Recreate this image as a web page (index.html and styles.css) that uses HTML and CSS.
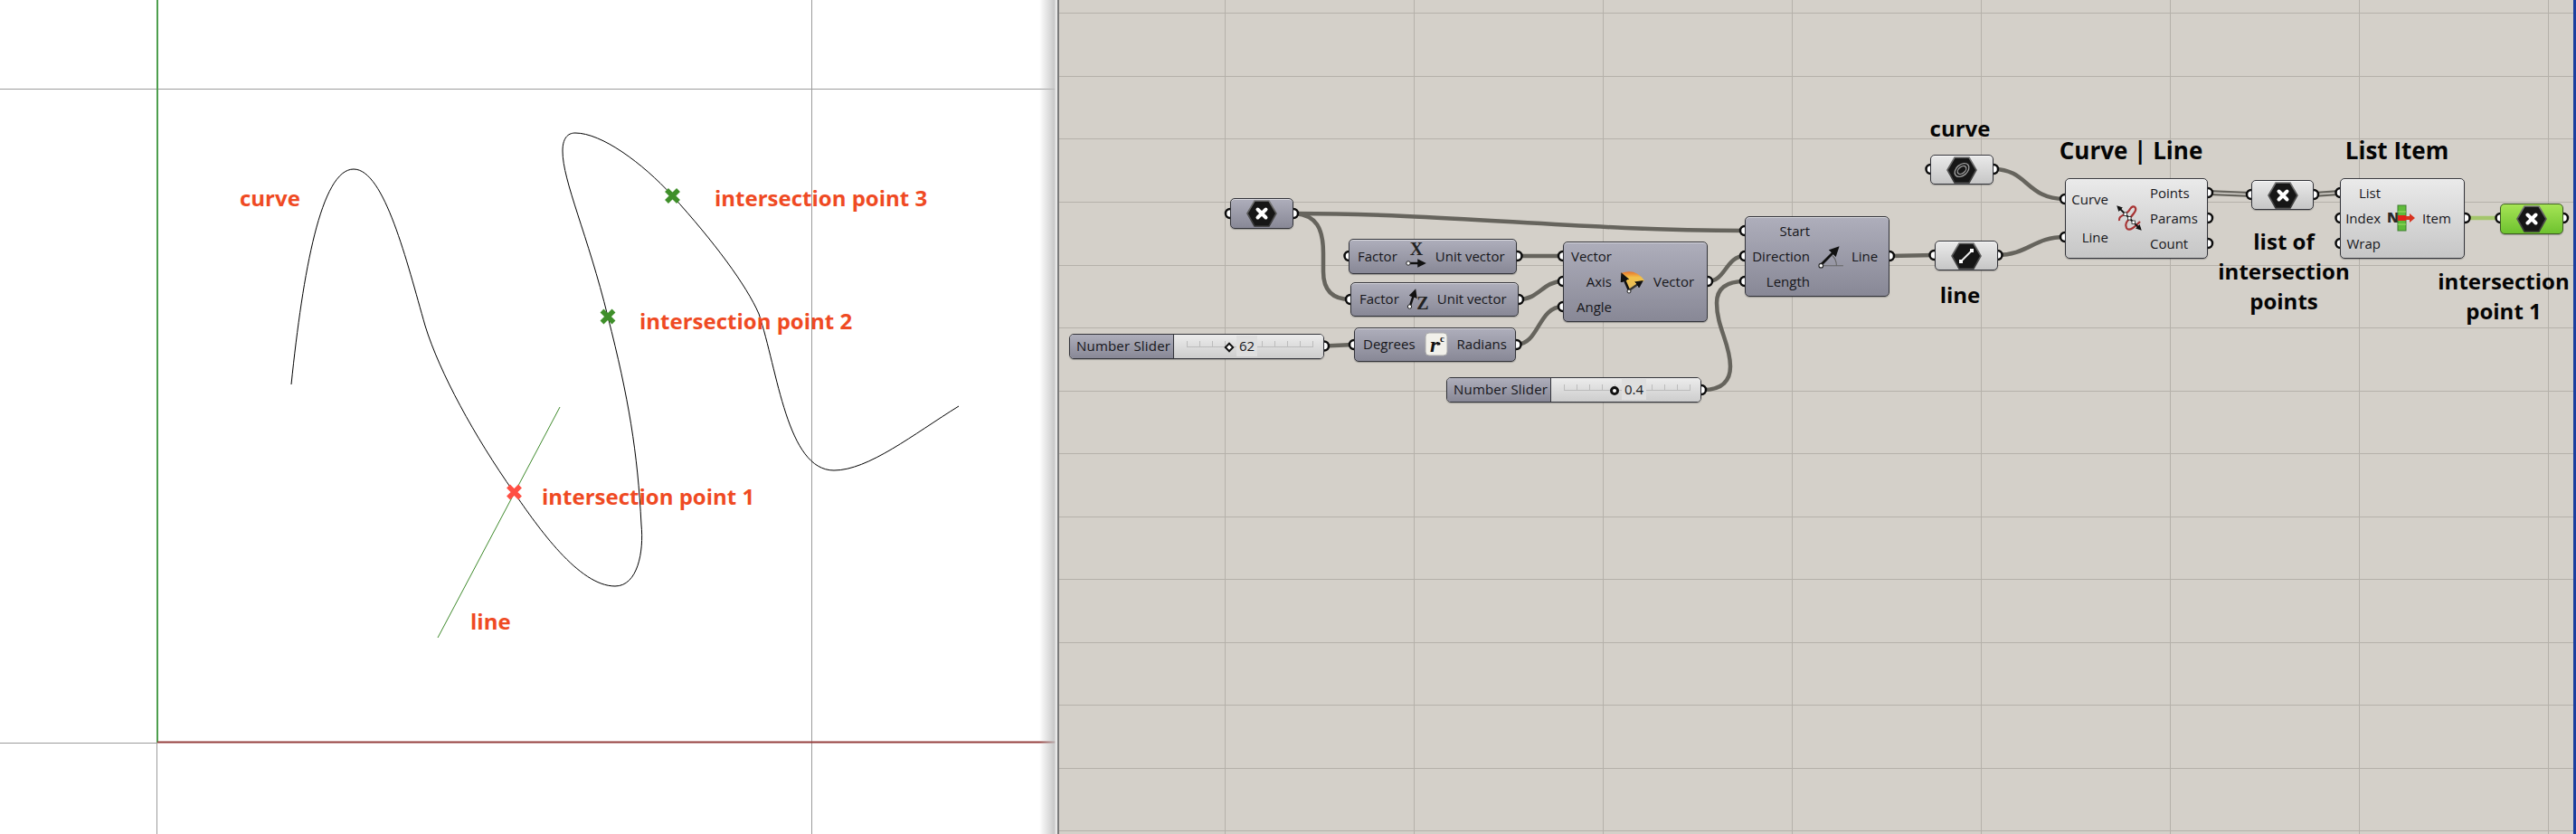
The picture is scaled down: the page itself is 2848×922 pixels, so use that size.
FILE: index.html
```html
<!DOCTYPE html>
<html lang="en">
<head>
<meta charset="utf-8">
<title>Curve and line intersection definition</title>
<link rel="stylesheet" href="styles.css">
</head>
<body>
<svg class="defs" aria-hidden="true">
  <defs>
    <linearGradient id="bevel" x1="0" y1="0" x2="0" y2="1"><stop offset="0" stop-color="#7a7a7a"/><stop offset="1" stop-color="#333"/></linearGradient>
    <linearGradient id="fan" x1="0" y1="0" x2="0" y2="1"><stop offset="0" stop-color="#e8732a"/><stop offset=".3" stop-color="#f2c14a"/><stop offset="1" stop-color="#e0b95e"/></linearGradient>
    <symbol id="hex" viewBox="0 0 34 30"><polygon points="1,15 9,1 25,1 33,15 25,29 9,29" fill="#161616" stroke="url(#bevel)" stroke-width="1.6"/></symbol>
    <symbol id="hexx" viewBox="0 0 34 30"><use href="#hex" width="34" height="30"/><path d="M12.5 10.5l9 9m0-9l-9 9" stroke="#fff" stroke-width="4" stroke-linecap="round"/></symbol>
    <marker id="tip" viewBox="0 0 10 10" refX="6" refY="5" markerWidth="4" markerHeight="4" orient="auto-start-reverse"><path d="M0 0L10 5L0 10z" fill="#111"/></marker>
    <marker id="tip-sm" viewBox="0 0 10 10" refX="6" refY="5" markerWidth="3.500" markerHeight="3.500" orient="auto-start-reverse"><path d="M0 0L10 5L0 10z" fill="#111"/></marker>
  </defs>
</svg>
<main class="app">
  <section class="viewport">
    <svg class="view-svg" viewBox="0 0 1169 922">
      <path class="v-grid" d="M0 98H1169M897.500 0V922M173.500 821V922M0 821.500H174"/>
      <path class="v-x" d="M174 0V821"/>
      <path class="v-y" d="M174 820.500H1167"/>
      <path class="v-curve" d="M322 425C335 300 355 187 391 187C425 187 450 290 470 360C486 412 525 483 568 544C595 583 640 648 680 648C705 648 712 610 709 580C705 500 695 440 672 350C650 260 622 200 622 167C622 150 630 147 636 147C665 147 710 180 743 216C790 268 825 315 839 347C860 410 870 520 922 520C960 520 1010 480 1060 449"/>
      <path class="v-line" d="M484 705L619 450"/>
      <path class="v-mark mark-red" d="M562 537.500L575 550.500M575 537.500L562 550.500"/>
      <path class="v-mark mark-green" d="M665.500 343.500L678.500 356.500M678.500 343.500L665.500 356.500"/>
      <path class="v-mark mark-green" d="M737 210L750 223M750 210L737 223"/>
    </svg>
    <span class="note note-curve">curve</span>
    <span class="note note-p3">intersection point 3</span>
    <span class="note note-p2">intersection point 2</span>
    <span class="note note-p1">intersection point 1</span>
    <span class="note note-line">line</span>
    <div class="edge-shadow"></div>
  </section>

  <section class="canvas">
    <svg class="wires" viewBox="1171 0 1674 922">
      <path class="grid" d="M1354.500 0V922M1563.500 0V922M1772.500 0V922M1981.500 0V922M2190.500 0V922M2399.500 0V922M2608.500 0V922M2817.500 0V922M1171 14.500H2845M1171 84.500H2845M1171 153.500H2845M1171 223.500H2845M1171 293.500H2845M1171 362.500H2845M1171 432.500H2845M1171 501.500H2845M1171 571.500H2845M1171 640.500H2845M1171 710.500H2845M1171 779.500H2845M1171 849.500H2845M1171 918.500H2845"/>
      <g class="wire">
        <path d="M1432 236C1600 236 1750 255 1929 255"/>
        <path d="M1432 236C1455 238 1463 252 1463 280V300C1463 320 1472 331 1493 331"/>
        <path d="M1678 283H1728"/>
        <path d="M1679 331C1702 331 1705 311 1728 311"/>
        <path d="M1676 381C1702 381 1700 339 1728 339"/>
        <path d="M1464 382.500L1497 381"/>
        <path d="M1888 311C1908 311 1908 283 1929 283"/>
        <path d="M1883 431C1905 431 1913 420 1913 405C1913 380 1898 362 1898 335C1898 318 1910 311 1929 311"/>
        <path d="M2089 283L2139 282"/>
        <path d="M2204 187C2242 187 2240 220 2283 220"/>
        <path d="M2208 282C2242 282 2248 262 2283 262"/>
      </g>
      <g class="wire-multi">
        <path d="M2441 213L2489 215"/>
        <path d="M2558 215L2587 213"/>
      </g>
      <g class="wire-multi-core">
        <path d="M2441 213L2489 215"/>
        <path d="M2558 215L2587 213"/>
      </g>
      <path class="wire-on" d="M2725 241H2764"/>
      <g class="ports">
        <circle cx="1360" cy="236" r="5"/><circle cx="1430" cy="236" r="5"/>
        <circle cx="1491.500" cy="283" r="5"/><circle cx="1677.500" cy="283" r="5"/>
        <circle cx="1493" cy="331" r="5"/><circle cx="1679" cy="331" r="5"/>
        <circle cx="1497" cy="381" r="5"/><circle cx="1676.500" cy="381" r="5"/>
        <circle cx="1464" cy="382.500" r="5"/><circle cx="1881" cy="431" r="5"/>
        <circle cx="1728" cy="283" r="5"/><circle cx="1728" cy="311" r="5"/><circle cx="1728" cy="339" r="5"/><circle cx="1888" cy="311" r="5"/>
        <circle cx="1929" cy="255" r="5"/><circle cx="1929" cy="283" r="5"/><circle cx="1929" cy="311" r="5"/><circle cx="2089" cy="283" r="5"/>
        <circle cx="2134.500" cy="187" r="5"/><circle cx="2204" cy="187" r="5"/>
        <circle cx="2138.500" cy="282" r="5"/><circle cx="2208.500" cy="282" r="5"/>
        <circle cx="2283" cy="220" r="5"/><circle cx="2283" cy="262" r="5"/>
        <circle cx="2441" cy="213" r="5"/><circle cx="2441" cy="241" r="5"/><circle cx="2441" cy="269" r="5"/>
        <circle cx="2489" cy="215" r="5"/><circle cx="2558" cy="215" r="5"/>
        <circle cx="2587.500" cy="213" r="5"/><circle cx="2587.500" cy="241" r="5"/><circle cx="2587.500" cy="269" r="5"/><circle cx="2725.500" cy="241" r="5"/>
        <circle cx="2764.500" cy="241" r="5"/><circle cx="2834" cy="241" r="5"/>
      </g>
    </svg>

    <div class="node dark param n-input"><svg class="hex"><use href="#hexx"/></svg></div>

    <div class="node dark strip n-factorx">
      <span>Factor</span>
      <svg class="ico" viewBox="0 0 26 32"><text class="serif-b" x="13" y="15" text-anchor="middle">X</text><path class="arrow" d="M5 24H20" marker-end="url(#tip)"/><circle class="dot" cx="4" cy="24" r="2.200"/></svg>
      <span>Unit vector</span>
    </div>
    <div class="node dark strip n-factorz">
      <span>Factor</span>
      <svg class="ico" viewBox="0 0 26 32"><text class="serif-b" x="18" y="28" text-anchor="middle">Z</text><path class="arrow" d="M4 24L9 9" marker-end="url(#tip)"/><circle class="dot" cx="3.500" cy="25" r="2.200"/></svg>
      <span>Unit vector</span>
    </div>
    <div class="node dark strip n-degrees">
      <span>Degrees</span>
      <svg class="ico tile-ico" viewBox="0 0 26 32"><rect class="tile" x="1" y="4" width="24" height="25" rx="4"/><text class="serif-r" x="6" y="25">r</text><text class="serif-c" x="17" y="14">c</text><circle cx="16" cy="16" r="1.600" fill="#111"/></svg>
      <span>Radians</span>
    </div>

    <div class="node slider n-slider1">
      <div class="s-label">Number Slider</div>
      <div class="s-track">
        <div class="rail"></div>
        <span class="s-value v-62">62</span>
        <span class="grip diamond g-62"></span>
      </div>
    </div>
    <div class="node slider n-slider2">
      <div class="s-label">Number Slider</div>
      <div class="s-track">
        <div class="rail"></div>
        <span class="s-value v-04">0.4</span>
        <span class="grip ring g-04"></span>
      </div>
    </div>

    <div class="node dark comp n-rotate">
      <div class="ins"><span>Vector</span><span>Axis</span><span>Angle</span></div>
      <div class="glyph"><svg class="ico-lg" viewBox="0 0 30 28"><path d="M11 25L2 5Q18 -1 28 13Z" fill="url(#fan)"/><path class="arrow-th" d="M11 24L4 8" marker-end="url(#tip)"/><path class="arrow-gr" d="M11 24L24 15" marker-end="url(#tip)"/><circle class="dot" cx="11" cy="25" r="2"/></svg></div>
      <div class="outs"><span>Vector</span></div>
    </div>
    <div class="node dark comp n-sdl">
      <div class="ins"><span>Start</span><span>Direction</span><span>Length</span></div>
      <div class="glyph"><svg class="ico-lg" viewBox="0 0 28 28"><path class="thin" d="M3 24H27M16 14Q20 18 20 24"/><path class="arrow-th" d="M4 23L20 7" marker-end="url(#tip)"/><circle class="dot" cx="4" cy="24" r="2.200"/></svg></div>
      <div class="outs"><span>Line</span></div>
    </div>

    <div class="node light param n-curve"><svg class="hex"><use href="#hex"/><g class="spiral"><ellipse cx="17" cy="15" rx="9" ry="6" transform="rotate(-40 17 15)"/><ellipse cx="17" cy="15" rx="5.500" ry="3.500" transform="rotate(-40 17 15)"/></g></svg></div>
    <div class="node light param n-line"><svg class="hex"><use href="#hex"/><path d="M11 21L23 9" stroke="#eee" stroke-width="2"/><rect x="9" y="19" width="4" height="4" fill="#fff"/><rect x="21" y="7" width="4" height="4" fill="#fff"/></svg></div>

    <div class="node light comp n-cl">
      <div class="ins spaced"><span>Curve</span><span>Line</span></div>
      <div class="glyph"><svg class="ico-lg" viewBox="0 0 30 30"><path class="red-curve" d="M4 18C3 11 12 13 16 5C20 -1 25 4 20 10C15 17 9 20 12 26C15 31 22 24 27 19"/><path class="arrow-cl" d="M3 3L27 27" marker-start="url(#tip-sm)" marker-end="url(#tip-sm)"/><rect class="sq" x="9" y="9" width="3.500" height="3.500"/><rect class="sq" x="13.500" y="13.500" width="3.500" height="3.500"/><rect class="sq" x="18" y="18" width="3.500" height="3.500"/></svg></div>
      <div class="outs"><span>Points</span><span>Params</span><span>Count</span></div>
    </div>

    <div class="node light param n-list"><svg class="hex"><use href="#hexx"/></svg></div>

    <div class="node light comp n-li">
      <div class="ins"><span>List</span><span>Index</span><span>Wrap</span></div>
      <div class="glyph"><svg class="ico-lg" viewBox="0 0 30 30"><text class="n-letter" x="-1" y="20">N</text><rect x="11" y="1" width="9" height="28" fill="#5fbb3a" stroke="#3f7f2f"/><path class="seg" d="M11 8H20M11 22H20"/><rect x="11" y="12" width="9" height="6" fill="#e2231a"/><path d="M20 13H24V10L30 15L24 20V17H20Z" fill="#d8321f"/></svg></div>
      <div class="outs"><span>Item</span></div>
    </div>

    <div class="node green param n-green"><svg class="hex"><use href="#hexx"/></svg></div>

    <div class="tag tag-curve">curve</div>
    <div class="tag tag-big tag-cl">Curve | Line</div>
    <div class="tag tag-big tag-li">List Item</div>
    <div class="tag tag-line">line</div>
    <div class="tag tag-list">list of<br>intersection<br>points</div>
    <div class="tag tag-p1">intersection<br>point 1</div>
  </section>
</main>
</body>
</html>
```

FILE: styles.css
```css
* { box-sizing: border-box; }
html, body { margin: 0; height: 100%; background: #fff; overflow: hidden; }
.defs { width: 0; height: 0; display: block; }
.app { display: flex; width: 2848px; height: 922px; font-family: "Open Sans", "Noto Sans", sans-serif; }

/* Left: viewport */
.viewport { position: relative; flex: 0 0 1169px; height: 922px; background: #fff; overflow: hidden; }
.view-svg { display: block; width: 1169px; height: 922px; }
.v-grid { stroke: #9c9c9c; stroke-width: 1; fill: none; shape-rendering: crispEdges; }
.v-x { stroke: #4f9f4f; stroke-width: 2; fill: none; }
.v-y { stroke: #96403f; stroke-width: 2; fill: none; }
.v-curve { stroke: #000; stroke-width: 1; fill: none; }
.v-line { stroke: #3f8a2c; stroke-width: 1; fill: none; }
.v-mark { stroke-width: 5.500; fill: none; }
.mark-red { stroke: #ff4f43; }
.mark-green { stroke: #3f8f2a; }
.edge-shadow { position: absolute; top: 0; bottom: 0; right: 0; width: 20px;
  background: linear-gradient(to right, rgba(190,190,190,0) 0, rgba(190,190,190,.85) 17px, #e8e8e8 18px); }

.note { position: absolute; font-weight: 700; font-size: 24px; line-height: 30px; color: #ef4a23; white-space: nowrap; }
.note-curve { left: 265px; top: 204px; }
.note-p3 { left: 790px; top: 204px; }
.note-p2 { left: 707px; top: 340px; }
.note-p1 { left: 599px; top: 534px; }
.note-line { left: 520px; top: 672px; }

/* Right: node canvas */
.canvas { position: relative; flex: 1 1 auto; height: 922px; background: #d4d0c9; border-left: 2px solid #7a7a7a; border-right: 3px solid #1b3fa0; overflow: hidden; }
.wires { position: absolute; left: 0; top: 0; width: 1674px; height: 922px; }
.grid { stroke: #b5b1aa; stroke-width: 1; fill: none; shape-rendering: crispEdges; }
.wire path { stroke: #66645d; stroke-width: 4.500; fill: none; }
.wire-multi path { stroke: #66645d; stroke-width: 6; fill: none; }
.wire-multi-core path { stroke: #d8d5cf; stroke-width: 1.500; fill: none; }
.wire-on { stroke: #a4c66c; stroke-width: 4.500; fill: none; }
.ports circle { fill: #fff; stroke: #0c0c0c; stroke-width: 2.500; }

.node { position: absolute; border: 1px solid #33343a; border-radius: 5px; font-size: 15px; color: #16161a; box-shadow: 0 1px 1px rgba(60,60,60,.35); white-space: nowrap; }
.dark { background: linear-gradient(#aeaebb, #888896); box-shadow: inset 0 1px 0 rgba(255,255,255,.55), 0 1px 1px rgba(60,60,60,.35); }
.light { background: linear-gradient(#eaeaea, #c6c6c6); box-shadow: inset 0 1px 0 rgba(255,255,255,.7), 0 1px 1px rgba(60,60,60,.35); }
.green { background: linear-gradient(#a6e455, #6ec22f); border-color: #3c5c22; }
.param { display: flex; align-items: center; justify-content: center; }
.hex { width: 34px; height: 30px; display: block; }
.hex use { width: 34px; height: 30px; }
.spiral ellipse { fill: none; stroke: #9a9a9a; stroke-width: 1.400; }

.n-input { left: 189px; top: 219px; width: 70px; height: 34px; }
.n-curve { left: 963px; top: 171px; width: 70px; height: 33px; }
.n-line { left: 968px; top: 266px; width: 70px; height: 33px; }
.n-list { left: 1318px; top: 199px; width: 69px; height: 33px; }
.n-green { left: 1593px; top: 225px; width: 70px; height: 34px; }

.strip { display: flex; align-items: center; padding-bottom: 2px; }
.n-factorx { left: 320px; top: 264px; width: 186px; height: 39px; padding-left: 9px; gap: 8px; }
.n-factorz { left: 322px; top: 312px; width: 186px; height: 38px; padding-left: 9px; gap: 8px; }
.n-degrees { left: 326px; top: 362px; width: 179px; height: 38px; padding-left: 9px; gap: 10px; }
.ico { width: 26px; height: 32px; flex: none; overflow: visible; }
.tile { fill: #f1f0ea; stroke: #aaa; stroke-width: 1; }
.serif-b { font-family: "Liberation Serif", serif; font-weight: 700; font-size: 20px; fill: #222; }
.serif-r { font-family: "Liberation Serif", serif; font-weight: 700; font-style: italic; font-size: 24px; fill: #111; }
.serif-c { font-family: "Liberation Serif", serif; font-weight: 700; font-size: 11px; fill: #111; }
.n-letter { font-family: "Open Sans", sans-serif; font-weight: 800; font-size: 16px; fill: #2a2a2a; }
.arrow { stroke: #111; stroke-width: 2.400; fill: none; }
.arrow-th { stroke: #111; stroke-width: 2.600; fill: none; }
.arrow-cl { stroke: #111; stroke-width: 1.800; fill: none; }
.arrow-gr { stroke: #333; stroke-width: 2.200; fill: none; }
.thin { stroke: #666; stroke-width: 1; fill: none; }
.dot { fill: #fff; stroke: #222; stroke-width: 1; }
.red-curve { stroke: #a83434; stroke-width: 2.200; fill: none; }
.sq { fill: #fff; stroke: #222; stroke-width: .8; }
.seg { stroke: #a4e06a; stroke-width: 1; fill: none; }

.slider { display: flex; overflow: hidden; }
.n-slider1 { left: 11px; top: 369px; width: 282px; height: 28px; }
.n-slider2 { left: 428px; top: 417px; width: 282px; height: 28px; }
.s-label { flex: 0 0 115px; padding-left: 7px; line-height: 25px; letter-spacing: .2px; background: linear-gradient(#aeaebb, #888896); border-right: 1px solid #33343a; }
.s-track { position: relative; flex: 1; background: linear-gradient(#ececec, #cdcdcd); }
.rail { position: absolute; left: 14px; top: 7px; width: 140px; height: 7px; border-bottom: 1px solid #bcbcbc;
  background: repeating-linear-gradient(to right, #bcbcbc 0, #bcbcbc 1px, transparent 1px, transparent 13.900px); }
.s-value { position: absolute; top: 1px; line-height: 23px; padding: 0 3px; background: #dfdfdf; }
.v-62 { left: 69px; }
.v-04 { left: 78px; }
.grip { position: absolute; background: #fff; }
.diamond { top: 10px; width: 8px; height: 8px; border: 2px solid #111; transform: rotate(45deg); }
.g-62 { left: 57px; }
.ring { left: 65px; top: 9px; width: 10px; height: 10px; border: 3px solid #111; border-radius: 50%; }

.comp { display: flex; align-items: stretch; padding-bottom: 2px; }
.ins, .outs { display: flex; flex-direction: column; justify-content: center; line-height: 28px; }
.ins { text-align: right; }
.ins.spaced { gap: 14px; }
.glyph { flex: 0 0 46px; display: flex; align-items: center; justify-content: center; }
.ico-lg { width: 30px; height: 30px; overflow: visible; }
.n-rotate { left: 557px; top: 267px; width: 160px; height: 89px; }
.n-rotate .ins { width: 53px; }
.n-sdl { left: 758px; top: 239px; width: 160px; height: 89px; }
.n-sdl .ins { width: 71px; }
.n-cl { left: 1112px; top: 197px; width: 158px; height: 89px; }
.n-cl .ins { width: 47px; }
.n-li { left: 1416px; top: 197px; width: 138px; height: 89px; }
.n-li .ins { width: 44px; }

.tag { position: absolute; width: 240px; text-align: center; font-weight: 700; font-size: 24px; line-height: 33px; color: #050505; }
.tag-big { font-size: 26px; }
.tag-curve { left: 876px; top: 125px; }
.tag-cl { left: 1065px; top: 150px; }
.tag-li { left: 1359px; top: 150px; }
.tag-line { left: 876px; top: 309px; }
.tag-list { left: 1234px; top: 250px; }
.tag-p1 { left: 1477px; top: 294px; }
```
